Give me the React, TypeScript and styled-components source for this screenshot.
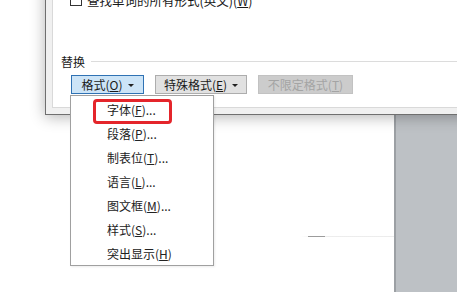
import React from "react";
import styled, { createGlobalStyle } from "styled-components";

const Global = createGlobalStyle`
  html, body { margin: 0; padding: 0; background: #ffffff; }
  body { font-family: "Noto Sans CJK SC", "Noto Sans", sans-serif; }
  #root { width: 457px; height: 292px; }
`;

const Scene = styled.div`
  position: relative;
  width: 457px;
  height: 292px;
  overflow: hidden;
  background: #ffffff;
  font-family: "Noto Sans CJK SC", "Noto Sans", sans-serif;
  font-size: 12px;
  color: #1a1a1a;
`;

const Workspace = styled.div`
  display: flex;
  width: 100%;
  height: 100%;
`;

const DocPage = styled.div`
  flex: 1;
  background: #ffffff;
  padding: 236px 0 0 300px;
  box-sizing: border-box;
`;

const RuleLine = styled.div`
  display: flex;
  align-items: center;
  height: 1px;
  background: linear-gradient(to right, rgba(235, 235, 235, 0) 0%, #ededed 20%, #ececec 100%);
`;

const Dash = styled.div`
  width: 17px;
  height: 1px;
  margin-left: 8px;
  background: #9c9c9c;
`;

const SidePanel = styled.div`
  width: 61px;
  background: #bdc1c5;
  border-left: 2px solid #9ca0a4;
`;

const Dialog = styled.div`
  position: absolute;
  left: 45px;
  top: -20px;
  width: 440px;
  background: #f0f0f0;
  border-left: 1px solid #6f6f6f;
  border-bottom: 1px solid #6f6f6f;
  padding: 0 0 6px 6px;
  box-shadow: 0 2px 14px rgba(0, 0, 0, 0.3);
  z-index: 2;
`;

const Panel = styled.div`
  display: flex;
  flex-direction: column;
  background: #ffffff;
  border-left: 1px solid #d9d9d9;
  border-bottom: 1px solid #d9d9d9;
  padding: 12px 0 13px 8px;
`;

const CheckRow = styled.div`
  display: flex;
  align-items: center;
  gap: 5px;
  height: 16px;
  margin-left: 9px;
  white-space: nowrap;
  font-size: 12.5px;
`;

const CheckBox = styled.span`
  width: 10px;
  height: 10px;
  border: 1px solid #333333;
  background: #ffffff;
`;

const Legend = styled.div`
  display: flex;
  align-items: center;
  gap: 6px;
  height: 16px;
  margin-top: 45px;
`;

const LegendLine = styled.div`
  flex: 1;
  height: 1px;
  background: #dcdcdc;
`;

const ButtonRow = styled.div`
  display: flex;
  gap: 11px;
  margin-top: 6px;
  margin-left: 10px;
`;

const Button = styled.div<{ $w: number; $variant: "active" | "normal" | "disabled" }>`
  box-sizing: border-box;
  width: ${(p) => p.$w}px;
  height: 19px;
  display: flex;
  align-items: center;
  justify-content: center;
  gap: 5px;
  font-size: 12px;
  line-height: 1;
  white-space: nowrap;
  background: ${(p) => (p.$variant === "active" ? "#cce4f7" : p.$variant === "disabled" ? "#cccccc" : "#e1e1e1")};
  border: 1px solid ${(p) => (p.$variant === "active" ? "#2f72b4" : p.$variant === "disabled" ? "#c2c2c2" : "#adadad")};
  color: ${(p) => (p.$variant === "disabled" ? "#a4a4a4" : "#1a1a1a")};
`;

const Arrow = styled.span`
  width: 0;
  height: 0;
  border-left: 3px solid transparent;
  border-right: 3px solid transparent;
  border-top: 3px solid #222222;
  margin-top: 1px;
`;

const Key = styled.u`
  text-decoration: underline;
  text-underline-offset: 1px;
`;

const Menu = styled.div`
  position: absolute;
  left: 70px;
  top: 95px;
  width: 142px;
  background: #ffffff;
  border: 1px solid #a0a0a0;
  padding: 1px 0 0 0;
  display: flex;
  flex-direction: column;
  z-index: 3;
  box-shadow: 1px 1px 2px rgba(0, 0, 0, 0.08);
`;

const MenuItem = styled.div`
  height: 24px;
  display: flex;
  align-items: center;
  padding-left: 36px;
  font-size: 12px;
  color: #222222;
  white-space: nowrap;
`;

const Highlight = styled.div`
  position: absolute;
  left: 93px;
  top: 99px;
  width: 79px;
  height: 25px;
  box-sizing: border-box;
  border: 3px solid #e4252b;
  border-radius: 4px;
  z-index: 4;
`;

const items: { label: string; key: string; tail: string }[] = [
  { label: "字体", key: "F", tail: "..." },
  { label: "段落", key: "P", tail: "..." },
  { label: "制表位", key: "T", tail: "..." },
  { label: "语言", key: "L", tail: "..." },
  { label: "图文框", key: "M", tail: "..." },
  { label: "样式", key: "S", tail: "..." },
  { label: "突出显示", key: "H", tail: "" },
];

export default function App() {
  return (
    <Scene>
      <Global />
      <Workspace>
        <DocPage>
          <RuleLine>
            <Dash />
          </RuleLine>
        </DocPage>
        <SidePanel />
      </Workspace>

      <Dialog>
        <Panel>
          <CheckRow>
            <CheckBox />
            <span>查找单词的所有形式(英文)(<Key>W</Key>)</span>
          </CheckRow>
          <Legend>
            <span>替换</span>
            <LegendLine />
          </Legend>
          <ButtonRow>
            <Button $w={73} $variant="active">
              <span>格式(<Key>O</Key>)</span>
              <Arrow />
            </Button>
            <Button $w={92} $variant="normal">
              <span>特殊格式(<Key>E</Key>)</span>
              <Arrow />
            </Button>
            <Button $w={95} $variant="disabled">
              <span>不限定格式(<Key>T</Key>)</span>
            </Button>
          </ButtonRow>
        </Panel>
      </Dialog>

      <Menu>
        {items.map((it) => (
          <MenuItem key={it.key}>
            {it.label}(<Key>{it.key}</Key>){it.tail}
          </MenuItem>
        ))}
      </Menu>
      <Highlight />
    </Scene>
  );
}
